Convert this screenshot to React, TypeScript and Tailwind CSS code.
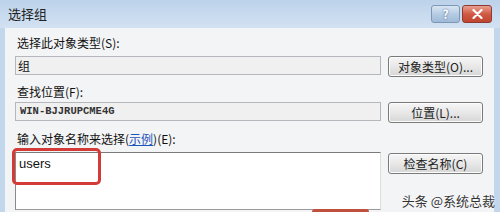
import React from "react";

const cjk = { fontFamily: '"Noto Sans CJK SC", "Liberation Sans", sans-serif' };

function Btn({ children }: { children: React.ReactNode }) {
  return (
    <div
      className="ml-[7px] flex h-[21px] w-[95px] items-center justify-center rounded-[3px] border border-[#7a7a7a] bg-gradient-to-b from-[#f6f6f6] via-[#e8e8e8] to-[#d6d6d6] text-[12px] text-[#222] shadow-[inset_0_0_0_1px_#fcfcfc]"
      style={cjk}
    >
      {children}
    </div>
  );
}

export default function App() {
  return (
    <div className="relative h-[212px] w-[500px] overflow-hidden bg-[#c3d7ec]" style={cjk}>
      {/* title bar */}
      <div className="flex h-[28px] items-center bg-gradient-to-b from-[#bcd2ea] to-[#d3e2f2] pl-[8px] pr-[8px]">
        <div className="text-[13px] text-[#222]">选择组</div>
        <div className="ml-auto flex gap-[2px] self-start pt-[5px]">
          <div className="flex h-[18px] w-[29px] items-center justify-center rounded-[3px] border border-[#7d97b4] bg-gradient-to-b from-[#d9e6f3] via-[#b7cce3] to-[#9fbad8] text-[12px] font-bold text-white [text-shadow:0_0_2px_#3a5a80]">
            ?
          </div>
          <div className="flex h-[18px] w-[30px] items-center justify-center rounded-[3px] border border-[#8e3a30] bg-gradient-to-b from-[#e8a090] via-[#d05a44] to-[#c04530] text-white">
            <svg width="11" height="10" viewBox="0 0 11 10">
              <path d="M1.5 1 L9.5 9 M9.5 1 L1.5 9" stroke="white" strokeWidth="2.2" strokeLinecap="round" />
            </svg>
          </div>
        </div>
      </div>

      {/* client area */}
      <div className="ml-[5px] mr-[6px] h-[184px] bg-[#f3f4f5] pt-[7px]">
        <div className="h-[16px] pl-[12px] text-[12px] leading-[16px] text-[#111]">选择此对象类型(S):</div>
        <div className="mt-[5px] flex items-start">
          <div className="ml-[10px] flex h-[19px] w-[366px] items-center border border-[#b5b7bc] bg-[#f0f0f0] pl-[2px] text-[12px] text-[#111]">
            组
          </div>
          <Btn>对象类型(O)...</Btn>
        </div>

        <div className="mt-[7px] h-[16px] pl-[12px] text-[12px] leading-[16px] text-[#111]">查找位置(F):</div>
        <div className="mt-[2px] flex items-start">
          <div
            className="ml-[10px] flex h-[19px] w-[366px] items-center border border-[#b5b7bc] bg-[#f0f0f0] pl-[4px] text-[10.5px] font-bold text-[#333]"
            style={{ fontFamily: '"Liberation Mono", monospace' }}
          >
            WIN-BJJRUPCME4G
          </div>
          <Btn>位置(L)...</Btn>
        </div>

        <div className="mt-[8px] h-[16px] pl-[12px] text-[12px] leading-[16px] text-[#111]">
          输入对象名称来选择(<span className="text-[#1a55c0] underline">示例</span>)(E):
        </div>
        <div className="mt-[5px] flex items-start">
          <div className="relative ml-[10px] h-[58px] w-[366px] border border-t-[#7a7a7a] border-l-[#8a8a8a] border-r-[#dcdcdc] border-b-[#9a9a9a] bg-white pl-[3px] pt-[3px]">
            <div className="text-[13px] leading-[15px] text-[#111]" style={{ fontFamily: '"Liberation Sans", Arial, sans-serif' }}>
              users
            </div>
            <div className="absolute left-[-4px] top-[-5px] h-[37px] w-[89px] rounded-[5px] border-[3px] border-[#d43a36]" />
          </div>
          <div className="mt-[1px]">
            <Btn>检查名称(C)</Btn>
          </div>
        </div>
      </div>

      {/* bottom highlighted button edge */}
      <div className="absolute left-[312px] top-[209px] h-[6px] w-[57px] rounded-t-[3px] bg-[#c0503e]" />

      {/* watermark */}
      <div className="absolute right-[5px] top-[191px] text-[13px] text-[#333] [text-shadow:0_0_2px_#ffffff]" style={cjk}>
        头条 @系统总裁
      </div>
    </div>
  );
}
